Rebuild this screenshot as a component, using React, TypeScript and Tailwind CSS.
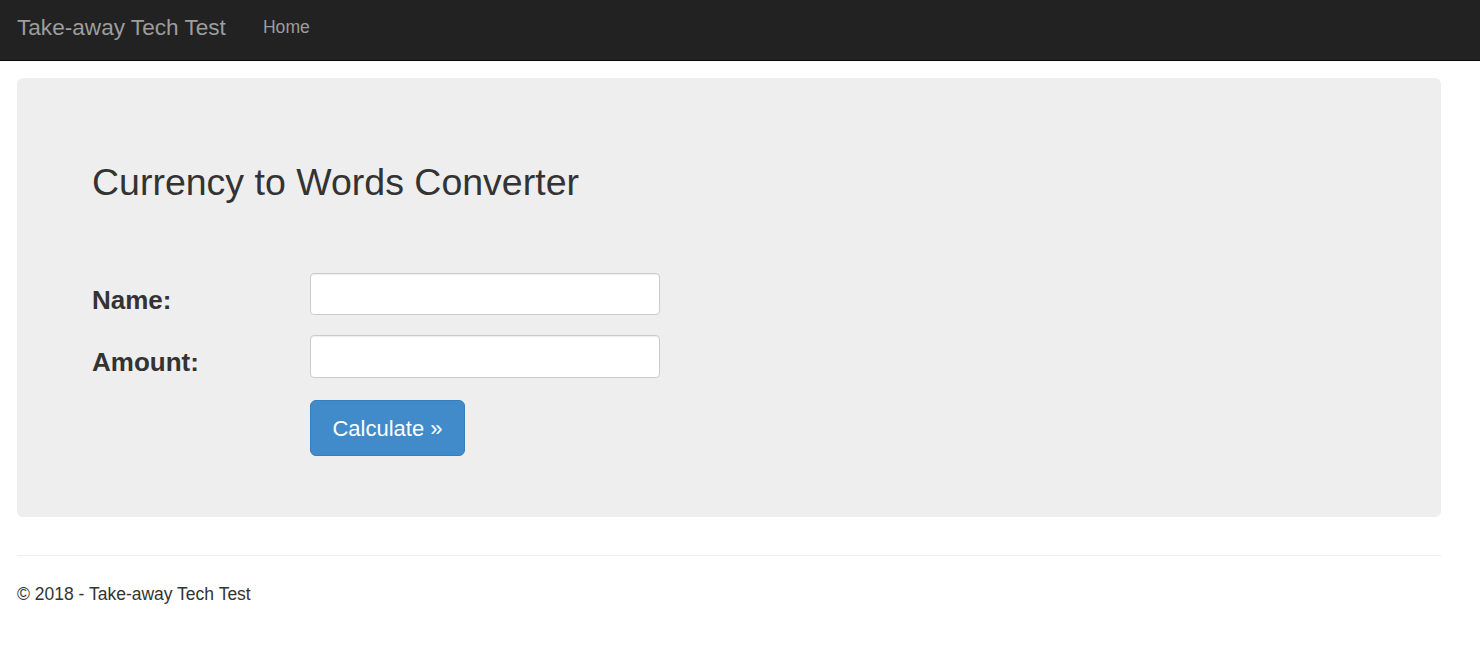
export default function App() {
  return (
    <div className="min-h-screen bg-white font-['Liberation_Sans',Arial,sans-serif] text-[#333]">
      <nav className="flex h-[61px] items-center border-b border-[#080808] bg-[#222] px-[17px] pb-[3px]">
        <span className="text-[22.6px] leading-none text-[#9d9d9d]">Take-away Tech Test</span>
        <span className="ml-[37px] mb-[2px] text-[17.6px] leading-none text-[#9d9d9d]">Home</span>
      </nav>

      <main className="w-[1424px] pl-[17px] pt-[17px] box-content">
        <section className="rounded-[6px] bg-[#eee] pb-[61px] pl-[75px] pt-[84px]">
          <h1 className="text-[37.5px] leading-[40px]">Currency to Words Converter</h1>

          <div className="mt-[71px] flex flex-col gap-[20px]">
            <div className="flex h-[42px] items-start">
              <label className="w-[218px] pt-[13px] text-[26px] font-bold leading-[29px]">Name:</label>
              <input className="h-[42px] w-[350px] rounded-[4px] border border-[#ccc] bg-white px-3 shadow-[inset_0_1px_1px_rgba(0,0,0,0.075)]" />
            </div>
            <div className="flex h-[43px] items-start">
              <label className="w-[218px] pt-[13px] text-[26px] font-bold leading-[29px]">Amount:</label>
              <input className="h-[43px] w-[350px] rounded-[4px] border border-[#ccc] bg-white px-3 shadow-[inset_0_1px_1px_rgba(0,0,0,0.075)]" />
            </div>
          </div>

          <div className="ml-[218px] mt-[22px]">
            <button className="h-[56px] w-[155px] rounded-[6px] border border-[#357ebd] bg-[#428bca] text-[22px] text-white">
              Calculate »
            </button>
          </div>
        </section>

        <footer className="mt-[38px]">
          <hr className="border-t border-[#eee]" />
          <p className="mt-[26px] text-[17.5px] leading-[24px]">© 2018 - Take-away Tech Test</p>
        </footer>
      </main>
    </div>
  );
}
